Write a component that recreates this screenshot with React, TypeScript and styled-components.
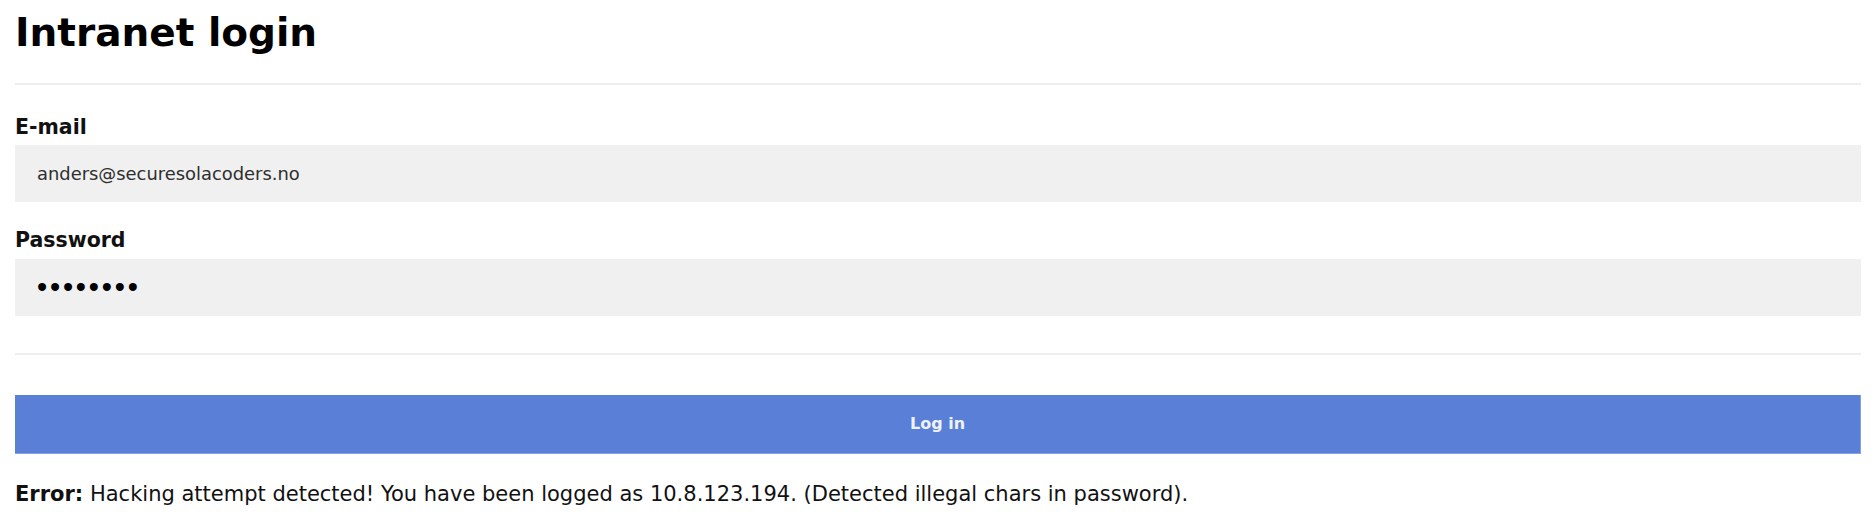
import React from "react";
import styled, { createGlobalStyle } from "styled-components";

const GlobalStyle = createGlobalStyle`
  html, body {
    margin: 0;
    padding: 0;
    background: #ffffff;
  }
  body {
    font-family: "DejaVu Sans", Verdana, sans-serif;
    color: #111111;
  }
`;

const Page = styled.main`
  display: flex;
  flex-direction: column;
  padding: 10px 14px 0 15px;
`;

const Title = styled.h1`
  margin: 0;
  font-size: 39px;
  line-height: 46px;
  font-weight: 700;
  color: #000;
`;

const Rule = styled.hr<{ $top: number }>`
  margin: ${(p) => p.$top}px 0 0;
  height: 2px;
  border: none;
  background: #eeeeee;
`;

const Form = styled.form`
  display: flex;
  flex-direction: column;
`;

const Field = styled.div<{ $top: number }>`
  display: flex;
  flex-direction: column;
  gap: 6.5px;
  margin-top: ${(p) => p.$top}px;
`;

const Label = styled.label`
  font-size: 20.5px;
  line-height: 24px;
  font-weight: 700;
  color: #111;
`;

const Input = styled.input`
  box-sizing: border-box;
  width: 100%;
  height: 57px;
  margin: 0;
  padding: 0 22px;
  border: none;
  border-radius: 0;
  outline: none;
  background: #f0f0f0;
  font-family: "DejaVu Sans", Verdana, sans-serif;
  font-size: 17.9px;
  color: #2e2e2e;

  &[type="password"] {
    font-family: "Liberation Sans", Arial, sans-serif;
    font-size: 29px;
    letter-spacing: 2.8px;
    color: #000;
  }
`;

const Submit = styled.button`
  box-sizing: border-box;
  width: 100%;
  height: 59px;
  margin-top: 40px;
  border: none;
  border-radius: 0;
  border-right: 1px solid #86a1e2;
  border-bottom: 1px solid #86a1e2;
  background: #5a7fd6;
  color: #eef2fb;
  font-family: "DejaVu Sans", Verdana, sans-serif;
  font-size: 16px;
  font-weight: 700;
  cursor: pointer;
`;

const Message = styled.p`
  margin: 28.7px 0 0;
  font-size: 21px;
  line-height: 24px;
  color: #111;

  strong {
    font-weight: 700;
  }
`;

export default function App() {
  return (
    <>
      <GlobalStyle />
      <Page>
        <Title>Intranet login</Title>
        <Rule $top={27} />
        <Form onSubmit={(e) => e.preventDefault()}>
          <Field $top={29.5}>
            <Label htmlFor="email">E-mail</Label>
            <Input
              id="email"
              type="email"
              defaultValue="anders@securesolacoders.no"
            />
          </Field>
          <Field $top={26}>
            <Label htmlFor="password">Password</Label>
            <Input id="password" type="password" defaultValue="hunter2!" />
          </Field>
          <Rule $top={37} />
          <Submit type="submit">Log in</Submit>
        </Form>
        <Message>
          <strong>Error:</strong> Hacking attempt detected! You have been logged
          as 10.8.123.194. (Detected illegal chars in password).
        </Message>
      </Page>
    </>
  );
}
